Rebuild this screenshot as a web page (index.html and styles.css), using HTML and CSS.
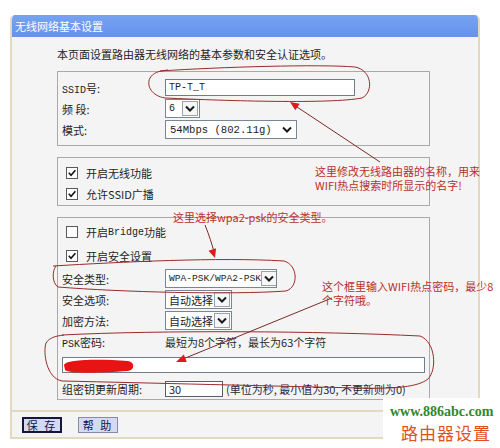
FILE: index.html
```html
<!DOCTYPE html>
<html lang="zh-CN">
<head>
<meta charset="utf-8">
<title>无线网络基本设置</title>
<link rel="stylesheet" href="styles.css">
</head>
<body>
<div class="page">
  <div class="panel">
    <div class="title">无线网络基本设置</div>
    <div class="content">
      <p class="desc">本页面设置路由器无线网络的基本参数和安全认证选项。</p>

      <div class="box box1">
        <div class="row"><span class="lbl"><span class="m">SSID</span>号:</span><span class="input w190"><span class="m val">TP-T_T</span></span></div>
        <div class="row"><span class="lbl">频 段:</span><span class="sel w35"><span class="m val">6</span><span class="arr"><svg viewBox="0 0 14 13" width="14" height="13"><path d="M3 4.5 L7 8.5 L11 4.5" fill="none" stroke="#1a1a1a" stroke-width="2"/></svg></span></span></div>
        <div class="row"><span class="lbl">模式:</span><span class="sel w132"><span class="m big val">54Mbps (802.11g)</span><span class="arr plain"><svg viewBox="0 0 14 13" width="14" height="13"><path d="M3 4.5 L7 8.5 L11 4.5" fill="none" stroke="#1a1a1a" stroke-width="2"/></svg></span></span></div>
      </div>

      <div class="box box2">
        <div class="row"><span class="cb"><svg viewBox="0 0 10 10" width="10" height="10"><path d="M1.8 4.8 L4 7.2 L8.4 2.2" fill="none" stroke="#111" stroke-width="1.6"/></svg></span>开启无线功能</div>
        <div class="row"><span class="cb"><svg viewBox="0 0 10 10" width="10" height="10"><path d="M1.8 4.8 L4 7.2 L8.4 2.2" fill="none" stroke="#111" stroke-width="1.6"/></svg></span>允许SSID广播</div>
      </div>

      <div class="box box3">
        <div class="row tall"><span class="cb"></span>开启<span class="m">Bridge</span>功能</div>
        <div class="row tall"><span class="cb"><svg viewBox="0 0 10 10" width="10" height="10"><path d="M1.8 4.8 L4 7.2 L8.4 2.2" fill="none" stroke="#111" stroke-width="1.6"/></svg></span>开启安全设置</div>
        <div class="row"><span class="lbl">安全类型:</span><span class="sel w112"><span class="m small val">WPA-PSK/WPA2-PSK</span><span class="arr"><svg viewBox="0 0 14 13" width="14" height="13"><path d="M3 4.5 L7 8.5 L11 4.5" fill="none" stroke="#1a1a1a" stroke-width="2"/></svg></span></span></div>
        <div class="row"><span class="lbl">安全选项:</span><span class="sel w67"><span class="val">自动选择</span><span class="arr"><svg viewBox="0 0 14 13" width="14" height="13"><path d="M3 4.5 L7 8.5 L11 4.5" fill="none" stroke="#1a1a1a" stroke-width="2"/></svg></span></span></div>
        <div class="row"><span class="lbl">加密方法:</span><span class="sel w67"><span class="val">自动选择</span><span class="arr"><svg viewBox="0 0 14 13" width="14" height="13"><path d="M3 4.5 L7 8.5 L11 4.5" fill="none" stroke="#1a1a1a" stroke-width="2"/></svg></span></span></div>
        <div class="row"><span class="lbl"><span class="m">PSK</span>密码:</span><span class="hint">最短为8个字符，最长为63个字符</span></div>
        <div class="row psk"><span class="input w363"></span></div>
        <div class="row"><span class="lbl">组密钥更新周期:</span><span class="input w58"><span class="val">30</span></span><span class="unit">(单位为秒, 最小值为30, 不更新则为0)</span></div>
      </div>
    </div>
    <div class="footer">
      <button class="btn primary">保 存</button>
      <button class="btn">帮 助</button>
    </div>
  </div>

  <svg class="marks" viewBox="0 0 500 448" width="500" height="448">
    <g fill="none" stroke="#9a2b2b" stroke-width="1">
      <path d="M160 71 C 220 67, 320 64, 355 67 C 372 70, 374 92, 362 98 C 330 104, 230 101, 165 98 C 152 96, 146 86, 150 78 C 153 73, 158 71, 168 70"/>
      <path d="M53 266 C 120 262, 220 257, 284 261 C 298 265, 299 287, 286 291 C 230 295, 120 292, 58 287 C 52 283, 52 271, 56 266"/>
      <path d="M62 335 C 160 330, 320 331, 420 336 C 436 342, 437 370, 428 379 C 418 387, 395 389, 360 388 C 270 386, 150 383, 62 381 C 46 378, 43 352, 46 343 C 49 338, 55 336, 64 335"/>
    </g>
    <g stroke="#7a2a2a" stroke-width="1" fill="none">
      <line x1="380" y1="162" x2="294" y2="105"/>
      <path d="M205 225 C 209 235, 212 244, 214 252"/>
      <line x1="332" y1="298" x2="183" y2="359"/>
    </g>
    <g fill="#e01a1a">
      <polygon points="290,102 299.7,103.7 295.3,110.3"/>
      <polygon points="215,258 216.1,248.3 208.5,250.7"/>
      <polygon points="176,362 186.8,361.9 183.8,354.5"/>
    </g>
    <path d="M64 365 C 66 359, 100 359, 128 361 C 135 362, 135 370, 128 371 C 100 373, 70 374, 65 370 Z" fill="#e81414"/>
  </svg>

  <div class="note n1">这里修改无线路由器的名称，用来<br>WIFI热点搜索时所显示的名字!</div>
  <div class="note n2">这里选择wpa2-psk的安全类型。</div>
  <div class="note n3">这个框里输入WIFI热点密码，最少8<br>个字符哦。</div>

  <div class="watermark">
    <div class="wm-url">www.886abc.com</div>
    <div class="wm-cn">路由器设置</div>
  </div>
</div>
</body>
</html>
```

FILE: styles.css
```css
* { box-sizing: border-box; }
html, body { margin: 0; padding: 0; background: #fff; }
body {
  font-family: "Noto Sans CJK SC", "Noto Sans", sans-serif;
  font-size: 11px;
  color: #1e1e1e;
}
.page {
  position: relative;
  width: 500px;
  height: 448px;
  overflow: hidden;
  padding: 15px 0 0 10px;
}
.panel {
  width: 470px;
  border: 2px solid #e4d8bf;
  border-top: 0;
  border-radius: 5px 5px 0 0;
  background: #f4f4f4;
  overflow: hidden;
}
.title {
  height: 22px;
  line-height: 22px;
  padding-left: 3px;
  color: #fff;
  background: linear-gradient(#77a3f2, #6691ec);
}
.content { padding: 9px 0 0 45px; }
.desc { margin: 0; height: 16px; line-height: 16px; }

.box { width: 373px; border: 1px solid #a9a9a9; }
.box1 { margin-top: 9px; padding: 5px 0 5px 0; }
.box2 { margin-top: 11px; padding: 4px 0 1px 0; }
.box3 { margin-top: 11px; padding: 2px 0 0 0; }

.row {
  display: flex;
  align-items: center;
  height: 21px;
  padding-left: 4px;
  white-space: nowrap;
}
.row.tall { height: 24px; }
.row.psk { height: 26px; }
.lbl { width: 103px; flex: none; }

.m { font-family: "Liberation Mono", "DejaVu Sans Mono", monospace; font-size: 10px; }
.m.big { font-size: 10.6px; }
.m.small { font-size: 9.6px; }

.input {
  display: flex;
  align-items: center;
  height: 17px;
  padding-left: 3px;
  background: #fff;
  border: 1px solid #6e7d8c;
  flex: none;
}
.w190 { width: 190px; }
.w363 { width: 363px; height: 16px; }
.w58 { width: 58px; height: 16px; border-color: #5c5c6c; }

.sel {
  display: flex;
  align-items: center;
  justify-content: space-between;
  height: 19px;
  padding-left: 3px;
  background: #fff;
  border: 1px solid #7a8594;
  flex: none;
  overflow: hidden;
}
.w35 { width: 35px; }
.w132 { width: 132px; padding-left: 4px; }
.w112 { width: 112px; }
.w67 { width: 67px; }
.arr {
  display: flex;
  align-items: center;
  justify-content: center;
  width: 16px;
  height: 15px;
  margin-right: 1px;
  border: 1px solid #9aa3ad;
  background: #f6f6f6;
  flex: none;
}
.arr.plain { border-color: transparent; background: #fff; }
.arr svg { display: block; }

.cb {
  display: flex;
  align-items: center;
  justify-content: center;
  width: 12px;
  height: 12px;
  margin: 0 8px 0 4px;
  border: 1px solid #5a5a5a;
  background: #fff;
  flex: none;
}
.cb svg { display: block; }

.hint { color: #2a2a2a; }
.unit { margin-left: 3px; color: #2a2a3a; }

.footer {
  margin-top: 10px;
  border-top: 2px solid #e4d8bf;
  padding: 5px 0 4px 10px;
  display: flex;
  gap: 16px;
}
.btn {
  width: 40px;
  height: 16px;
  padding: 0;
  font-family: inherit;
  font-size: 11px;
  line-height: 13px;
  letter-spacing: 2px;
  color: #12124a;
  background: #d5daf3;
  border: 1px solid #8a8aa4;
}
.btn.primary { border: 2px solid #16163a; }

.marks {
  position: absolute;
  left: 0;
  top: 0;
  pointer-events: none;
}
.note {
  position: absolute;
  color: #b8302c;
  font-size: 11px;
  line-height: 14px;
  white-space: nowrap;
}
.n1 { left: 315px; top: 164px; }
.n2 { left: 173px; top: 210px; }
.n3 { left: 322px; top: 279px; }

.watermark {
  position: absolute;
  left: 383px;
  top: 398px;
  width: 117px;
  height: 50px;
  background: #fff;
}
.wm-url {
  position: absolute;
  left: 7px;
  top: 5px;
  font-family: "Liberation Serif", serif;
  font-weight: bold;
  font-size: 14px;
  line-height: 17px;
  color: #2e8a2a;
}
.wm-cn {
  position: absolute;
  left: 18px;
  top: 25px;
  font-size: 17px;
  line-height: 20px;
  letter-spacing: 1px;
  color: #e2501e;
}
```
